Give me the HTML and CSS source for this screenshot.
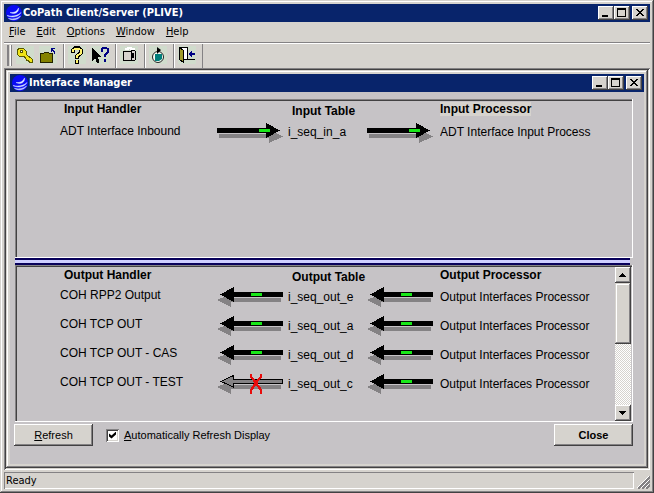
FILE: index.html
```html
<!DOCTYPE html>
<html lang="en">
<head>
<meta charset="utf-8">
<title>CoPath Client/Server (PLIVE)</title>
<link rel="stylesheet" href="styles.css">
</head>
<body>
<svg class="defs" aria-hidden="true">
  <symbol id="logo" viewBox="0 0 16 16">
    <circle cx="8" cy="8" r="8" fill="#0a0af4"/>
    <path d="M4 7.500c4 .5 7-1 8.500-4.500 .5 4-3 7-8.500 4.500zM1 10.500c6 1.500 11 0 14-3-2 4-8 6-14 3zM2.500 13.500c5 1 9 0 12-2.500-2 3.500-7 5-12 2.500z" fill="#e8f0ff" stroke="#c8d8ff" stroke-width=".5"/>
  </symbol>
  <symbol id="min" viewBox="0 0 12 10"><path d="M2 7h6v2H2z"/></symbol>
  <symbol id="max" viewBox="0 0 12 10"><path d="M1 0h9v9H1zM2 2v6h7V2z" fill-rule="evenodd"/></symbol>
  <symbol id="close" viewBox="0 0 12 10"><path d="M2 1h2v1h1v1h2V2h1V1h2v1H9v1H8v1H7v1h1v1h1v1h1v1H8V7H7V6H5v1H4v1H2V7h1V6h1V5h1V4H4V3H3V2H2z"/></symbol>
  <symbol id="right" viewBox="0 0 66 20">
    <path d="M2 11h50V7l14 6.500-14 6.500v-5H2z" fill="#848284"/>
    <path d="M0 5h49V0l14 7.500L49 15v-5H0z"/>
    <path d="M42 6h11v3H42z" fill="#18e818"/>
  </symbol>
  <symbol id="left" viewBox="0 0 66 20">
    <path d="M64 11H14V7L0 13l14 7v-5h50z" fill="#848284"/>
    <path d="M66 5H17V0L3 7.500 17 15v-5h49z"/>
    <path d="M34 6h11v3H34z" fill="#18e818"/>
  </symbol>
  <symbol id="broken" viewBox="0 0 66 20">
    <path d="M64 11H14V7L0 13l14 7v-5h50z" fill="#848284"/>
    <path d="M65.500 5.500h-49v-4L4 7.500l12.500 5.500V9.500h49z" fill="#848284" stroke="#000"/>
    <path d="M34 0v3l3 3 4 6 3 4v4M44 0v3l-3 3-4 6-3 4v4" fill="none" stroke="#e80c0c" stroke-width="2.500"/>
  </symbol>
</svg>
<div class="window">
  <header class="titlebar">
    <svg class="logo"><use href="#logo"/></svg>
    <h1>CoPath Client/Server (PLIVE)</h1>
    <button class="cap" aria-label="Minimize"><svg><use href="#min"/></svg></button>
    <button class="cap" aria-label="Maximize"><svg><use href="#max"/></svg></button>
    <button class="cap cap-close" aria-label="Close"><svg><use href="#close"/></svg></button>
  </header>
  <nav class="menu">
    <button><u>F</u>ile</button><button><u>E</u>dit</button><button><u>O</u>ptions</button><button><u>W</u>indow</button><button><u>H</u>elp</button>
  </nav>
  <div class="toolbar">
    <span class="grip"></span>
    <div class="group">
      <button aria-label="Log in"><svg viewBox="0 0 18 18"><path d="M2.500 2.500h5l3 3v3l6 5v3h-3l-1-2h-2l-1-3-2-1h-4l-2-2v-4z" fill="#f0e418" stroke="#5a5800"/><path d="M4 4h2v2H4z" fill="#fff" stroke="#5a5800"/></svg></button>
      <button aria-label="Open folder"><svg viewBox="0 0 18 18"><path d="M1.500 7.500h3l1-1h4l1 1h3v9h-12z" fill="#848200" stroke="#222100"/><path d="M12 2h4v1h-3v3h-1zM13 3h1v1h1v1h1v3h-1V6h-1V5h-1z" fill="#000084"/></svg></button>
    </div>
    <div class="group">
      <button aria-label="Help"><svg viewBox="0 0 18 18"><path d="M5 7V4l2-2h4l2 2v3l-4 3v3M9 14v4" fill="none" stroke="#000" stroke-width="4"/><path d="M5 6V4l2-1h4l2 1v3l-4 3v2M9 14v3" fill="none" stroke="#fff36b" stroke-width="2"/></svg></button>
      <button aria-label="Context help"><svg viewBox="0 0 18 18"><path d="M1 2v13l3-3 2 5h2v-2l-1-4h3z"/><path d="M11 6V3l1-1h3l2 1v3l-3 3v2M14 13v3" fill="none" stroke="#000084" stroke-width="2"/></svg></button>
    </div>
    <div class="group">
      <button aria-label="Break"><svg viewBox="0 0 18 18"><path d="M5 3h3V2h3v1h4" fill="none" stroke="#fff" stroke-width="2"/><path d="M3.500 5.500h8v9h-8z" fill="#d6d3ce" stroke="#000"/><path d="M11.500 4.500h3l1 1v8l-1 1h-3zM12.500 7.500h1v4h-1z" fill="#d6d3ce" stroke="#000"/></svg></button>
    </div>
    <div class="group">
      <button aria-label="Reload"><svg class="smooth" viewBox="0 0 18 18"><circle cx="9" cy="11" r="5.500" fill="#f4fff4" stroke="#222"/><path d="M6 8h7v5l-3 2H6z" fill="#007f7b"/><path d="M8 1l4 3-4 4z"/></svg></button>
    </div>
    <div class="group">
      <button aria-label="Exit"><svg viewBox="0 0 18 18"><path d="M1.500 1.500h8v12h-8z" fill="#fff" stroke="#000"/><path d="M1.500 1.500l4 3v12l-4-3z" fill="#a09c28" stroke="#000"/><path d="M9 13.500h8" stroke="#000"/><path d="M10 8l4-4v3h3v2h-3v3z" fill="#000084"/></svg></button>
    </div>
  </div>
  <main class="workspace">
    <section class="child">
      <header class="titlebar">
        <svg class="logo"><use href="#logo"/></svg>
        <h2>Interface Manager</h2>
        <button class="cap" aria-label="Minimize"><svg><use href="#min"/></svg></button>
        <button class="cap" aria-label="Maximize"><svg><use href="#max"/></svg></button>
        <button class="cap cap-close" aria-label="Close"><svg><use href="#close"/></svg></button>
      </header>
      <div class="content">
        <div class="panel">
          <table>
            <colgroup><col class="c-handler"><col class="c-arrow"><col class="c-table"><col class="c-arrow"><col></colgroup>
            <thead><tr><th>Input Handler</th><td></td><th class="mid">Input Table</th><td></td><th class="last"><mark>Input Processor</mark></th></tr></thead>
            <tbody><tr><td>ADT Interface Inbound</td><td><svg class="arrow"><use href="#right"/></svg></td><td>i_seq_in_a</td><td><svg class="arrow"><use href="#right"/></svg></td><td><span class="clip">ADT Interface Input Process</span></td></tr></tbody>
          </table>
        </div>
        <div class="splitter"></div>
        <div class="panel panel-out">
          <table>
            <colgroup><col class="c-handler"><col class="c-arrow"><col class="c-table"><col class="c-arrow"><col></colgroup>
            <thead><tr><th>Output Handler</th><td></td><th class="mid">Output Table</th><td></td><th class="last">Output Processor</th></tr></thead>
            <tbody>
              <tr><td>COH RPP2 Output</td><td><svg class="arrow"><use href="#left"/></svg></td><td>i_seq_out_e</td><td><svg class="arrow"><use href="#left"/></svg></td><td><span class="clip">Output Interfaces Processor</span></td></tr>
              <tr><td>COH TCP OUT</td><td><svg class="arrow"><use href="#left"/></svg></td><td>i_seq_out_a</td><td><svg class="arrow"><use href="#left"/></svg></td><td><span class="clip">Output Interfaces Processor</span></td></tr>
              <tr><td>COH TCP OUT - CAS</td><td><svg class="arrow"><use href="#left"/></svg></td><td>i_seq_out_d</td><td><svg class="arrow"><use href="#left"/></svg></td><td><span class="clip">Output Interfaces Processor</span></td></tr>
              <tr><td>COH TCP OUT - TEST</td><td><svg class="arrow"><use href="#broken"/></svg></td><td>i_seq_out_c</td><td><svg class="arrow"><use href="#left"/></svg></td><td><span class="clip">Output Interfaces Processor</span></td></tr>
            </tbody>
          </table>
          <div class="scrollbar">
            <button class="cap" aria-label="Scroll up"><svg viewBox="0 0 12 10"><path d="M5 3h1v1h1v1h1v1h1v1H2V6h1V5h1V4h1z"/></svg></button>
            <div class="thumb"></div>
            <button class="cap cap-down" aria-label="Scroll down"><svg viewBox="0 0 12 10"><path d="M2 3h7v1H8v1H7v1H6v1H5V6H4V5H3V4H2z"/></svg></button>
          </div>
        </div>
        <div class="actions">
          <button class="btn"><u>R</u>efresh</button>
          <label><input type="checkbox" checked><span><u>A</u>utomatically Refresh Display</span></label>
          <button class="btn btn-close">Close</button>
        </div>
      </div>
    </section>
  </main>
  <footer class="status">
    <div class="field">Ready</div>
    <svg class="sizer" viewBox="0 0 13 13"><path d="M1 13L13 1M5 13l8-8M9 13l4-4" stroke="#848284" stroke-width="2"/><path d="M0 12L12 0M4 12l8-8M8 12l4-4" stroke="#fff"/></svg>
  </footer>
</div>
</body>
</html>
```
FILE: styles.css
```css
* { box-sizing: border-box; }
body { margin: 0; color: #000; font: 12px/16px "Liberation Sans", sans-serif; }
button { font: inherit; color: inherit; padding: 0; border: 0; background: none; }
svg { display: block; shape-rendering: crispEdges; }
.defs { position: absolute; width: 0; height: 0; }

.window {
  display: flex; flex-direction: column; min-height: 100vh; padding: 4px;
  background: #d6d3ce;
  box-shadow: inset -1px -1px #424142, inset 1px 1px #d6d3ce, inset -2px -2px #848284, inset 2px 2px #fff;
}
.titlebar { display: flex; align-items: center; height: 18px; padding: 0 2px; background: #08246b; }
.titlebar h1, .titlebar h2 { flex: 1; margin: 0 0 0 1px; color: #fff; font: bold 11px/18px "DejaVu Sans Condensed", "DejaVu Sans", sans-serif; }
.logo, .smooth { shape-rendering: auto; }
.logo { width: 16px; height: 16px; }
.cap {
  display: flex; align-items: center; justify-content: center; width: 16px; height: 14px;
  background: #d6d3ce;
  box-shadow: inset -1px -1px #424142, inset 1px 1px #fff, inset -2px -2px #848284;
}
.cap svg { width: 12px; height: 10px; }
.cap-close { margin-left: 2px; }

.menu { display: flex; height: 21px; padding-bottom: 1px; border-bottom: 1px solid #848284; }
.menu button { padding: 1px 6px 0 5px; font: 11px/18px "DejaVu Sans Condensed", "DejaVu Sans", sans-serif; }
.toolbar { display: flex; height: 25px; border-top: 1px solid #fff; }
.grip { width: 5px; margin: 1px 0 2px 3px; border: solid; border-width: 0 1px 0 1px; border-color: #fff #848284; box-shadow: inset -1px 0 #fff, inset 1px 0 #848284; }
.group { display: flex; gap: 5px; padding: 2px 6px 0 4px; border-right: 1px solid #848284; box-shadow: 1px 0 #fff; }
.group:last-child { box-shadow: none; }
.group button { width: 18px; height: 18px; background: #d0dccc; }
.group svg { width: 18px; height: 18px; }

.workspace {
  display: flex; flex: 1; padding: 2px; background: #848284;
  box-shadow: inset 1px 1px #848284, inset -1px -1px #fff, inset 2px 2px #424142, inset -2px -2px #d6d3ce;
}
.child {
  display: flex; flex-direction: column; flex: 1; padding: 4px; background: #c6c3c6;
  box-shadow: inset -1px -1px #424142, inset 1px 1px #d6d3ce, inset -2px -2px #848284, inset 2px 2px #fff, inset 0 0 0 4px #d6d3ce;
}
.content { display: flex; flex-direction: column; flex: 1; padding: 7px 11px 18px 5px; }
.panel {
  flex: 1 0 0; padding: 2px; display: flex;
  box-shadow: inset -1px -1px #fff, inset 1px 1px #848284, inset 2px 2px #424142;
}
.panel table { flex: 1; align-self: flex-start; table-layout: fixed; border-collapse: collapse; width: 100%; }
.c-handler { width: 200px; }
.c-arrow { width: 71px; }
.c-table { width: 79px; }
th, td { padding: 0; text-align: left; vertical-align: top; white-space: nowrap; }
th:first-child { padding-left: 47px; }
td:first-child { padding-left: 43px; }
thead tr { height: 18px; }
thead .mid { padding: 2px 0 0 4px; }
thead .last { padding-left: 2px; }
tbody tr { height: 29px; }
tbody td { padding-top: 4px; }
tbody td:last-child { padding: 5px 0 0 2px; }
tbody td:nth-child(3) { padding-top: 5px; }
.panel-out tbody td { padding-top: 2px; }
.panel-out tbody td:nth-child(3), .panel-out tbody td:last-child { padding-top: 4px; }
mark { background: #d6d3ce; color: inherit; }
.arrow { width: 66px; height: 20px; }
.clip { display: block; overflow: hidden; max-width: 152px; }
.splitter { height: 7px; margin-right: 3px; border: solid #08005a; border-width: 2px 0; background: #ceceff; }
.panel-out { padding-bottom: 1px; }
.scrollbar { display: flex; flex-direction: column; width: 16px; background: repeating-conic-gradient(#fff 0 25%, #d6d3ce 0 50%) 0 0 / 2px 2px; }
.scrollbar .cap { height: 16px; }
.thumb { height: 61px; background: #d6d3ce; box-shadow: inset -1px -1px #424142, inset 1px 1px #d6d3ce, inset -2px -2px #848284, inset 2px 2px #fff; }
.scrollbar .cap-down { margin-top: auto; }

.actions { display: flex; align-items: center; margin: 2px 0 0 -1px; font-size: 11px; }
.btn { width: 79px; height: 22px; background: #d6d3ce; box-shadow: inset -1px -1px #424142, inset 1px 1px #fff, inset -2px -2px #848284; }
.btn-close { margin-left: auto; font-weight: bold; }
.actions label { display: flex; align-items: center; gap: 5px; margin-left: 13px; }
.actions input {
  appearance: none; width: 13px; height: 13px; margin: 0;
  background: #fff; box-shadow: inset 1px 1px #848284, inset -1px -1px #fff, inset 2px 2px #424142, inset -2px -2px #d6d3ce;
}
.actions input:checked::before {
  content: ""; display: block; width: 7px; height: 7px; margin: 3px; background: #000;
  clip-path: polygon(0 28%, 36% 58%, 100% 0, 100% 42%, 36% 100%, 0 70%);
}

.status { display: flex; margin-top: 2px; }
.field { flex: 1; height: 17px; padding: 1px 0 0 2px; font: 11px/16px "DejaVu Sans Condensed", "DejaVu Sans", sans-serif; box-shadow: inset 1px 1px #848284, inset -1px -1px #fff; }
.sizer { width: 13px; height: 13px; margin: 4px 0 0 3px; }
```
